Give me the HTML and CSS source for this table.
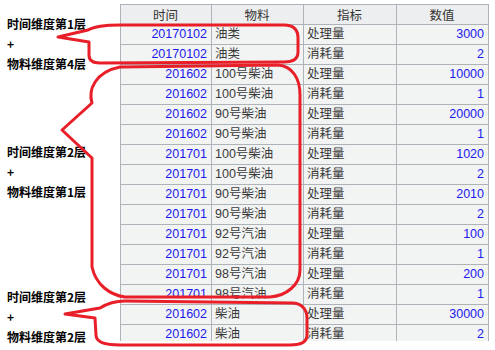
FILE: index.html
```html
<!DOCTYPE html>
<html lang="zh">
<head>
<meta charset="utf-8">
<title>维度层级</title>
<link rel="stylesheet" href="styles.css">
</head>
<body>
<div class="page">
  <div class="labels">
    <div class="group g1"><div>时间维度第1层</div><div>+</div><div>物料维度第4层</div></div>
    <div class="group g2"><div>时间维度第2层</div><div>+</div><div>物料维度第1层</div></div>
    <div class="group g3"><div>时间维度第2层</div><div>+</div><div>物料维度第2层</div></div>
  </div>
  <div class="tablewrap">
    <table class="grid">
      <colgroup><col class="c1"><col class="c2"><col class="c3"><col class="c4"></colgroup>
      <thead><tr><th>时间</th><th>物料</th><th>指标</th><th>数值</th></tr></thead>
      <tbody>
        <tr><td class="t">20170102</td><td>油类</td><td>处理量</td><td class="v">3000</td></tr>
        <tr><td class="t">20170102</td><td>油类</td><td>消耗量</td><td class="v">2</td></tr>
        <tr><td class="t">201602</td><td>100号柴油</td><td>处理量</td><td class="v">10000</td></tr>
        <tr><td class="t">201602</td><td>100号柴油</td><td>消耗量</td><td class="v">1</td></tr>
        <tr><td class="t">201602</td><td>90号柴油</td><td>处理量</td><td class="v">20000</td></tr>
        <tr><td class="t">201602</td><td>90号柴油</td><td>消耗量</td><td class="v">1</td></tr>
        <tr><td class="t">201701</td><td>100号柴油</td><td>处理量</td><td class="v">1020</td></tr>
        <tr><td class="t">201701</td><td>100号柴油</td><td>消耗量</td><td class="v">2</td></tr>
        <tr><td class="t">201701</td><td>90号柴油</td><td>处理量</td><td class="v">2010</td></tr>
        <tr><td class="t">201701</td><td>90号柴油</td><td>消耗量</td><td class="v">2</td></tr>
        <tr><td class="t">201701</td><td>92号汽油</td><td>处理量</td><td class="v">100</td></tr>
        <tr><td class="t">201701</td><td>92号汽油</td><td>消耗量</td><td class="v">1</td></tr>
        <tr><td class="t">201701</td><td>98号汽油</td><td>处理量</td><td class="v">200</td></tr>
        <tr><td class="t">201701</td><td>98号汽油</td><td>消耗量</td><td class="v">1</td></tr>
        <tr><td class="t">201602</td><td>柴油</td><td>处理量</td><td class="v">30000</td></tr>
        <tr><td class="t">201602</td><td>柴油</td><td>消耗量</td><td class="v">2</td></tr>
      </tbody>
    </table>
  </div>
  <svg class="marks" width="495" height="350" viewBox="0 0 495 350" aria-hidden="true">
    <path d="M 89 42 L 58 37 L 88 30 C 95 26 106 25 120 25 L 284 25 C 294 25 298 30 298 38 L 298 52 C 298 59 293 62 284 62 L 100 63 C 92 63 89 60 89 55 Z"/>
    <path d="M 92 158 L 62 130 L 92 103 C 88 90 95 72 120 67 L 278 65 C 292 66 300 78 300 95 L 300 270 C 300 285 286 296 270 297 L 125 297 C 110 295 96 285 92 267 Z"/>
    <path d="M 95 318 L 65 314 L 100 308 C 108 303 115 301 125 301 L 292 303 C 302 303 307 310 307 318 L 307 335 C 307 342 300 345 290 345 L 120 345 C 104 345 96 342 96 335 Z"/>
  </svg>
</div>
</body>
</html>
```
FILE: styles.css
```css
html, body {
  margin: 0;
  padding: 0;
  background: #ffffff;
}
.page {
  position: relative;
  width: 495px;
  height: 350px;
  display: flex;
  overflow: hidden;
}
.labels {
  width: 120px;
  flex: none;
  font-family: "Noto Sans CJK SC", "Liberation Sans", sans-serif;
  font-weight: bold;
  font-size: 12px;
  color: #000;
}
.group {
  padding-left: 7px;
}
.group div {
  height: 20px;
  line-height: 20px;
}
.g1 { margin-top: 14px; }
.g2 { margin-top: 68px; }
.g3 { margin-top: 85px; }
.tablewrap {
  margin-top: 4px;
  height: 337px;
  overflow: hidden;
  flex: none;
}
.grid {
  border-collapse: collapse;
  table-layout: fixed;
  width: 368px;
  font-family: "Liberation Sans", "Noto Sans CJK SC", sans-serif;
  font-size: 12.5px;
  color: #3a3a3a;
}
.c1 { width: 91px; }
.c2 { width: 92px; }
.c3 { width: 93px; }
.c4 { width: 92px; }
.grid th, .grid td {
  border: 1px solid #adb3b8;
  height: 19px;
  padding: 0 4px 0 3px;
  line-height: 19px;
  white-space: nowrap;
  overflow: hidden;
  box-sizing: border-box;
}
.grid th {
  background: #eceeef;
  font-weight: normal;
  text-align: center;
  color: #333;
  font-family: "Noto Sans CJK SC", "Liberation Sans", sans-serif;
}
.grid td {
  background: #f2f3f3;
  height: 20px;
}
.grid td.t, .grid td.v {
  text-align: right;
  color: #1a1af0;
}
.marks {
  position: absolute;
  left: 0;
  top: 0;
  fill: none;
  stroke: #e81e28;
  stroke-width: 3;
  stroke-linejoin: round;
  stroke-linecap: round;
}
```
